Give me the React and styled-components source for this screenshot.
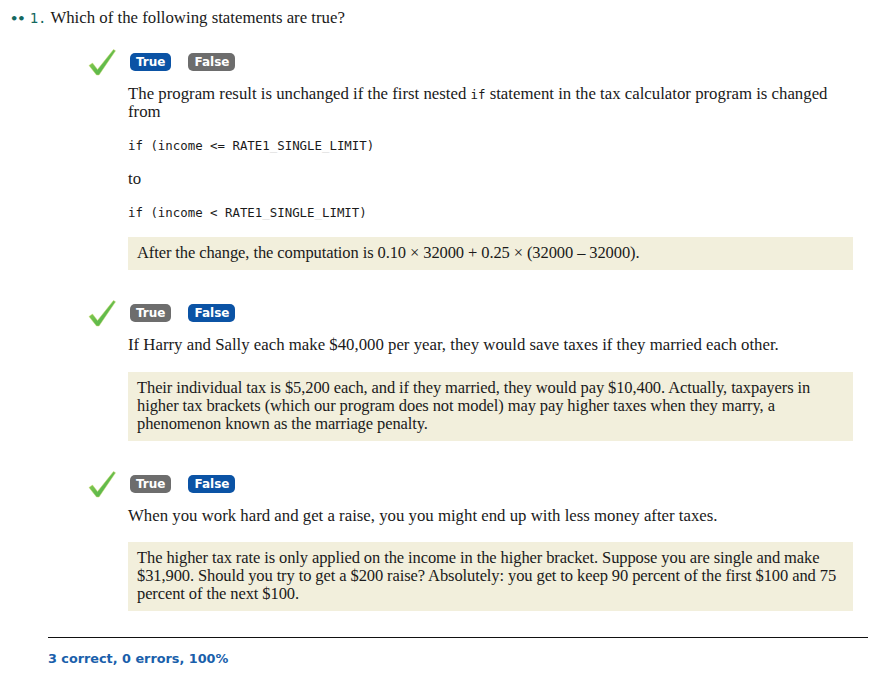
import React from "react";
import styled, { createGlobalStyle } from "styled-components";

const GlobalStyle = createGlobalStyle`
  body {
    margin: 0;
    background: #ffffff;
    color: #1a1a1a;
    font-family: "Liberation Serif", "Times New Roman", serif;
  }
`;

const Page = styled.div`
  width: 874px;
  padding: 8px 0 0 0;
`;

const Header = styled.div`
  display: flex;
  align-items: baseline;
  gap: 5px;
  padding-left: 10px;
  font-size: 16.8px;
  line-height: 20px;
`;

const Dots = styled.span`
  color: #14685f;
  font-family: "DejaVu Sans", sans-serif;
  font-weight: bold;
  font-size: 13px;
  letter-spacing: -1px;
`;

const Number = styled.span`
  color: #14685f;
  font-family: "DejaVu Sans Mono", monospace;
  font-size: 14px;
`;

const List = styled.div`
  padding-left: 88px;
  padding-right: 21px;
  margin-top: 18px;
`;

const Item = styled.div`
  margin-bottom: ${(p) => (p.$last ? "0" : "28px")};
`;

const ChoiceRow = styled.div`
  display: flex;
  align-items: center;
  height: 30px;
`;

const Check = styled.svg`
  width: 28px;
  height: 28px;
  margin-right: 14px;
`;

const Choice = styled.span`
  display: inline-flex;
  align-items: center;
  height: 18px;
  padding: 0 6px;
  margin-right: 17px;
  border-radius: 5px;
  background: ${(p) => (p.$selected ? "#0b53a5" : "#6d6d6d")};
  color: #ffffff;
  font-family: "DejaVu Sans", sans-serif;
  font-weight: bold;
  font-size: 12px;
`;

const Body = styled.div`
  padding-left: 40px;
`;

const Statement = styled.p`
  margin: 8px 0 0 0;
  font-size: 16.8px;
  line-height: 17.5px;
`;

const Code = styled.code`
  font-family: "DejaVu Sans Mono", monospace;
  font-size: 12.4px;
  line-height: 1;
`;

const CodeLine = styled.pre`
  margin: 17px 0 0 0;
  font-family: "DejaVu Sans Mono", monospace;
  font-size: 12.4px;
  line-height: 17px;
`;

const Under = styled.span`
  color: #d6d6d6;
`;

const Plain = styled.p`
  margin: 16px 0 0 0;
  font-size: 16.8px;
  line-height: 17px;
`;

const Feedback = styled.div`
  margin-top: ${(p) => p.$gap};
  padding: 7px 9px 8px 9px;
  background: #f2efdc;
  font-size: 16.5px;
  line-height: 18px;
  letter-spacing: -0.1px;
`;

const Rule = styled.hr`
  margin: 26px 6px 0 48px;
  border: 0;
  border-top: 1px solid #111111;
`;

const Summary = styled.div`
  padding: 13px 0 0 48px;
  color: #1a5fab;
  font-family: "DejaVu Sans", sans-serif;
  font-weight: bold;
  font-size: 12.8px;
`;

const CheckMark = () => (
  <Check viewBox="0 0 28 28">
    <defs>
      <linearGradient id="ck" x1="0" y1="0" x2="1" y2="1">
        <stop offset="0" stopColor="#a6d65a" />
        <stop offset="0.5" stopColor="#66bd4c" />
        <stop offset="1" stopColor="#4bb04a" />
      </linearGradient>
    </defs>
    <path
      d="M1 17.5 L4.5 15 L9.5 21.5 L25.5 1.5 L27.5 2.8 L11 27 L8.5 27 Z"
      fill="url(#ck)"
      stroke="#c8d96a"
      strokeWidth="0.5"
    />
  </Check>
);

const code = (text) =>
  text.split("_").map((part, i) => (
    <React.Fragment key={i}>
      {i > 0 && <Under>_</Under>}
      {part}
    </React.Fragment>
  ));

const items = [
  {
    answer: true,
    statement: (
      <>
        The program result is unchanged if the first nested <Code>if</Code>{" "}
        statement in the tax calculator program is changed from
      </>
    ),
    extra: true,
    feedback:
      "After the change, the computation is 0.10 × 32000 + 0.25 × (32000 – 32000).",
  },
  {
    answer: false,
    statement:
      "If Harry and Sally each make $40,000 per year, they would save taxes if they married each other.",
    feedback:
      "Their individual tax is $5,200 each, and if they married, they would pay $10,400. Actually, taxpayers in higher tax brackets (which our program does not model) may pay higher taxes when they marry, a phenomenon known as the marriage penalty.",
  },
  {
    answer: false,
    statement:
      "When you work hard and get a raise, you you might end up with less money after taxes.",
    feedback:
      "The higher tax rate is only applied on the income in the higher bracket. Suppose you are single and make $31,900. Should you try to get a $200 raise? Absolutely: you get to keep 90 percent of the first $100 and 75 percent of the next $100.",
  },
];

const App = () => {
  return (
    <Page>
      <GlobalStyle />
      <Header>
        <Dots>••</Dots>
        <span>
          <Number>1.</Number> Which of the following statements are true?
        </span>
      </Header>
      <List>
        {items.map((item, i) => (
          <Item key={i} $last={i === items.length - 1}>
            <ChoiceRow>
              <CheckMark />
              <Choice $selected={item.answer}>True</Choice>
              <Choice $selected={!item.answer}>False</Choice>
            </ChoiceRow>
            <Body>
              <Statement>{item.statement}</Statement>
              {item.extra && (
                <>
                  <CodeLine>{code("if (income <= RATE1_SINGLE_LIMIT)")}</CodeLine>
                  <Plain>to</Plain>
                  <CodeLine>{code("if (income < RATE1_SINGLE_LIMIT)")}</CodeLine>
                </>
              )}
              <Feedback $gap={item.extra ? "16px" : "18px"}>
                {item.feedback}
              </Feedback>
            </Body>
          </Item>
        ))}
      </List>
      <Rule />
      <Summary>3 correct, 0 errors, 100%</Summary>
    </Page>
  );
};

export default App;
